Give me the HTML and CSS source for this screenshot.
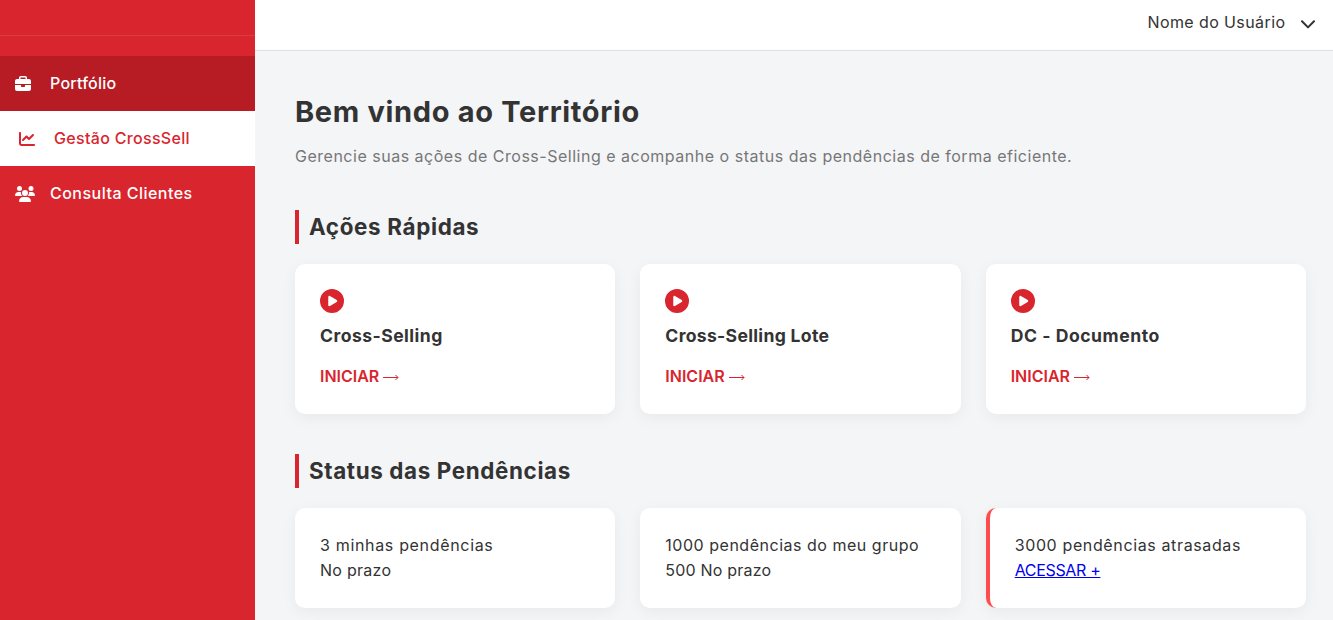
FILE: index.html
```html
<!DOCTYPE html>
<html lang="pt-BR">
<head>
<meta charset="utf-8">
<title>Território</title>
<link rel="stylesheet" href="styles.css">
</head>
<body>
<svg class="sprite" aria-hidden="true">
  <symbol id="play" viewBox="0 0 512 512"><path d="M0 256a256 256 0 1 1 512 0A256 256 0 1 1 0 256zM188.3 147.1c-7.6 4.2-12.3 12.3-12.3 20.9V344c0 8.7 4.7 16.7 12.3 20.9s16.8 4.1 24.3-.5l144-88c7.1-4.4 11.5-12.1 11.5-20.5s-4.4-16.1-11.5-20.5l-144-88c-7.4-4.5-16.7-4.7-24.3-.5z"/></symbol>
  <symbol id="arrow" viewBox="0 0 16 10"><path d="M0 5.5H15M12.5 3L15 5.5L12.5 8" fill="none" stroke="currentColor" stroke-width="1"/></symbol>
</svg>
<div class="layout">
  <aside class="sidebar">
    <div class="brand"></div>
    <nav class="menu">
      <a class="item current"><svg class="icon" viewBox="0 0 512 512"><path d="M184 48l144 0c4.4 0 8 3.6 8 8l0 40L176 96l0-40c0-4.4 3.6-8 8-8zm-56 8l0 40L64 96C28.7 96 0 124.7 0 160l0 96 192 0 128 0 192 0 0-96c0-35.3-28.7-64-64-64l-64 0 0-40c0-30.9-25.1-56-56-56L184 0c-30.9 0-56 25.1-56 56zM512 288l-192 0 0 32c0 17.7-14.3 32-32 32l-64 0c-17.7 0-32-14.3-32-32l0-32L0 288 0 416c0 35.3 28.7 64 64 64l384 0c35.3 0 64-28.7 64-64l0-128z"/></svg><span class="t-portfolio">Portfólio</span></a>
      <a class="item hover"><svg class="icon" viewBox="0 0 512 512"><path d="M64 64c0-17.7-14.3-32-32-32S0 46.3 0 64V400c0 44.2 35.8 80 80 80H480c17.7 0 32-14.3 32-32s-14.3-32-32-32H80c-8.8 0-16-7.2-16-16V64zm406.6 86.6c12.5-12.5 12.5-32.8 0-45.3s-32.8-12.5-45.3 0L320 210.7l-57.4-57.4c-12.5-12.5-32.8-12.5-45.3 0l-112 112c-12.5 12.5-12.5 32.8 0 45.3s32.8 12.5 45.3 0L240 221.3l57.4 57.4c12.5 12.5 32.8 12.5 45.3 0l128-128z"/></svg><span class="t-gestao">Gestão CrossSell</span></a>
      <a class="item"><svg class="icon wide" viewBox="0 0 640 512"><path d="M144 0a80 80 0 1 1 0 160A80 80 0 1 1 144 0zM512 0a80 80 0 1 1 0 160A80 80 0 1 1 512 0zM0 298.7C0 239.8 47.8 192 106.7 192h42.7c15.9 0 31 3.5 44.6 9.7c-1.3 7.2-1.9 14.7-1.9 22.3c0 38.2 16.8 72.5 43.3 96c-.2 0-.4 0-.7 0H21.3C9.6 320 0 310.4 0 298.7zM405.3 320c-.2 0-.4 0-.7 0c26.6-23.5 43.3-57.8 43.3-96c0-7.6-.7-15-1.9-22.3c13.6-6.3 28.7-9.7 44.6-9.7h42.7C592.2 192 640 239.8 640 298.7c0 11.8-9.6 21.3-21.3 21.3H405.3zM224 224a96 96 0 1 1 192 0 96 96 0 1 1 -192 0zM128 485.3C128 411.7 187.7 352 261.3 352H378.7C452.3 352 512 411.7 512 485.3c0 14.7-11.9 26.7-26.7 26.7H154.7c-14.7 0-26.7-11.9-26.7-26.7z"/></svg><span class="t-consulta">Consulta Clientes</span></a>
    </nav>
  </aside>
  <div class="page">
    <header class="topbar"><span class="t-user">Nome do Usuário</span><svg class="chevron" viewBox="0 0 14 9"><path d="M1 1.2L7 7.4L13 1.2" fill="none" stroke="currentColor" stroke-width="2" stroke-linecap="round" stroke-linejoin="round"/></svg></header>
    <main class="content">
      <h1><span class="t-h1">Bem vindo ao Território</span></h1>
      <p class="lead"><span class="t-lead">Gerencie suas ações de Cross-Selling e acompanhe o status das pendências de forma eficiente.</span></p>
      <section>
        <h2><span class="t-acoes">Ações Rápidas</span></h2>
        <div class="grid">
          <article class="card action"><svg class="play"><use href="#play"/></svg><h3><span class="t-cs">Cross-Selling</span></h3><a class="start"><span class="t-iniciar">INICIAR</span><svg class="arrow"><use href="#arrow"/></svg></a></article>
          <article class="card action"><svg class="play"><use href="#play"/></svg><h3><span class="t-csl">Cross-Selling Lote</span></h3><a class="start"><span class="t-iniciar">INICIAR</span><svg class="arrow"><use href="#arrow"/></svg></a></article>
          <article class="card action"><svg class="play"><use href="#play"/></svg><h3><span class="t-dc">DC - Documento</span></h3><a class="start"><span class="t-iniciar">INICIAR</span><svg class="arrow"><use href="#arrow"/></svg></a></article>
        </div>
      </section>
      <section>
        <h2><span class="t-status">Status das Pendências</span></h2>
        <div class="grid">
          <article class="card status"><div><span class="t-s1">3 minhas pendências</span></div><div><span class="t-s2">No prazo</span></div></article>
          <article class="card status"><div><span class="t-s3">1000 pendências do meu grupo</span></div><div><span class="t-s4">500 No prazo</span></div></article>
          <article class="card status late"><div><span class="t-s5">3000 pendências atrasadas</span></div><div><a class="link t-s6" href="#">ACESSAR +</a></div></article>
        </div>
      </section>
    </main>
  </div>
</div>
</body>
</html>
```

FILE: styles.css
```css
* { box-sizing: border-box; margin: 0; padding: 0; }
body { font: 16px/25px Inter, "Open Sans", sans-serif; color: #333; background: #f4f5f7; overflow: hidden; }
span { white-space: nowrap; }
.sprite { display: none; }
.layout { display: flex; height: 620px; }
.sidebar { width: 255px; flex: none; background: #d9252d; color: #fff; }
.brand { height: 36px; border-bottom: 1px solid rgba(255, 255, 255, .1); margin-bottom: 20px; }
.item { display: flex; align-items: center; height: 55px; padding-left: 15px; font-weight: 500; }
.item.current { background: #b71c24; }
.item.hover { background: #fff; color: #d9252d; padding-left: 19px; }
.icon { width: 16px; height: 16px; margin-right: 19px; fill: currentColor; }
.icon.wide { width: 20px; margin-right: 15px; }
.page { flex: 1; min-width: 0; }
.topbar { height: 51px; background: #fff; border-bottom: 1px solid #e0e0e0; display: flex; align-items: center; justify-content: flex-end; gap: 15.6px; padding: 0 18px 5px 0; }
.chevron { width: 14px; height: 9px; margin-top: 3px; }
.content { padding: 39px 27px 0 40px; }
h1 { font-size: 29px; line-height: 44px; font-weight: 700; }
.lead { color: #777; margin: 10px 0 41px; line-height: 25px; }
h2 { font-size: 22.4px; line-height: 34px; font-weight: 700; border-left: 4px solid #d9252d; padding-left: 10px; margin-bottom: 20px; }
.grid { display: grid; grid-template-columns: repeat(3, 1fr); gap: 25px; margin-bottom: 40px; }
.card { background: #fff; border-radius: 10px; padding: 25px; box-shadow: 0 4px 15px rgba(0, 0, 0, .05); }
.action { height: 150px; display: flex; flex-direction: column; }
.play { display: block; width: 24px; height: 24px; fill: #d9252d; }
h3 { font-size: 17.6px; line-height: 26px; font-weight: 700; margin: 10px 0 15px; }
.start { display: flex; align-items: center; gap: 4px; color: #d9252d; font-weight: 600; line-height: 25px; }
.arrow { width: 16px; height: 10px; }
.status { height: 100px; }
.late { border-left: 4px solid #ff4d4d; }
.link { color: #00e; text-decoration: underline; white-space: nowrap; }

/* Tracking per label */
.t-portfolio { letter-spacing: .22px; }
.t-gestao { letter-spacing: .32px; }
.t-consulta { letter-spacing: .48px; }
.t-user { letter-spacing: .4px; }
.t-h1 { letter-spacing: .67px; }
.t-lead { letter-spacing: .51px; }
.t-acoes { letter-spacing: .66px; }
.t-status { letter-spacing: .63px; }
.t-cs { letter-spacing: .45px; }
.t-csl { letter-spacing: .3px; }
.t-dc { letter-spacing: .54px; }
.t-s1 { letter-spacing: .67px; }
.t-s2 { letter-spacing: .27px; }
.t-s3 { letter-spacing: .52px; }
.t-s4 { letter-spacing: .2px; }
.t-s5 { letter-spacing: .63px; }
.t-s6 { letter-spacing: -.33px; }
```
